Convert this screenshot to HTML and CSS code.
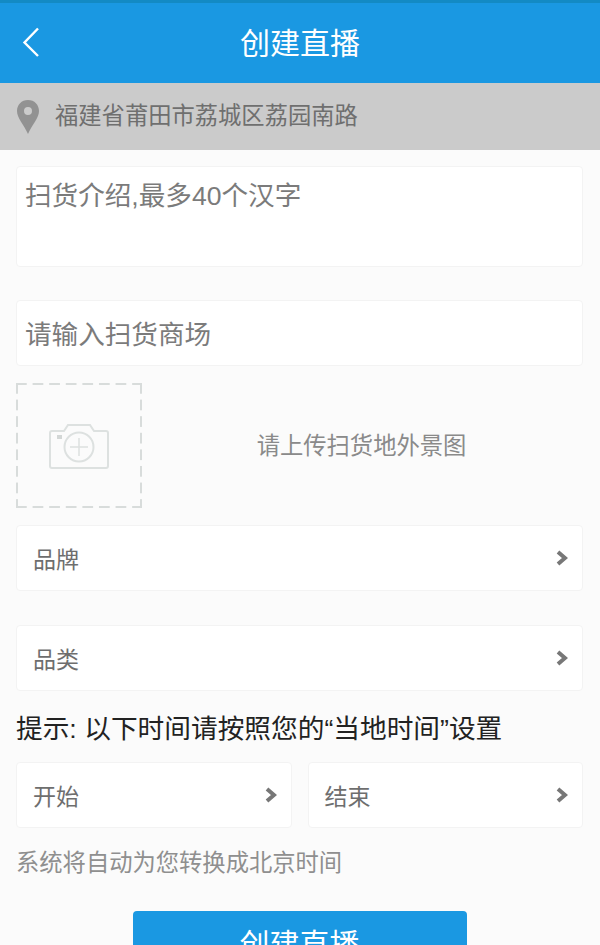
FILE: index.html
```html
<!DOCTYPE html>
<html lang="zh-CN">
  <head>
    <meta charset="UTF-8" />
    <meta name="viewport" content="width=device-width, initial-scale=1.0" />
    <title>创建直播</title>
    <link rel="stylesheet" href="styles.css">
  </head>

  <body>
    <header class="topbar">
      <svg class="back" width="20" height="32" viewBox="0 0 20 32">
        <path d="M17 2.5 L3.5 16.5 L17 30" fill="none" stroke="#fff" stroke-width="2.4" />
      </svg>
      <h1>创建直播</h1>
    </header>

    <div class="location">
      <svg class="pin" width="24" height="36" viewBox="0 0 24 36">
        <path fill-rule="evenodd" fill="#929292" d="M12 1 C5.5 1 1 5.8 1 12 C1 19 8 26 12 35 C16 26 23 19 23 12 C23 5.8 18.5 1 12 1 Z M12 8 A4 4 0 1 1 12 16 A4 4 0 1 1 12 8 Z" />
      </svg>
      <span>福建省莆田市荔城区荔园南路</span>
    </div>

    <main class="form">
      <div class="card intro">扫货介绍,最多40个汉字</div>
      <div class="card mall">请输入扫货商场</div>

      <div class="upload">
        <div class="upload-box">
          <svg width="60" height="46" viewBox="0 0 60 46">
            <g fill="none" stroke="#dde1e0" stroke-width="2">
              <path d="M3 8 H15 L19 2 H41 L45 8 H57 A2 2 0 0 1 59 10 V43 A2 2 0 0 1 57 45 H3 A2 2 0 0 1 1 43 V10 A2 2 0 0 1 3 8 Z" />
              <circle cx="30" cy="24" r="14.5" />
              <path d="M30 15 V33 M21 24 H39" stroke-width="1.5" />
            </g>
            <rect x="8" y="12" width="5" height="4" fill="#d3d7d6" />
          </svg>
        </div>
        <p>请上传扫货地外景图</p>
      </div>

      <div class="card row brand">
        <span>品牌</span>
        <svg class="chevron" width="12" height="16" viewBox="0 0 12 16"><path d="M2 2 L9 8 L2 14" /></svg>
      </div>
      <div class="card row category">
        <span>品类</span>
        <svg class="chevron" width="12" height="16" viewBox="0 0 12 16"><path d="M2 2 L9 8 L2 14" /></svg>
      </div>

      <p class="tip">提示: 以下时间请按照您的“当地时间”设置</p>

      <div class="times">
        <div class="card row">
          <span>开始</span>
          <svg class="chevron" width="12" height="16" viewBox="0 0 12 16"><path d="M2 2 L9 8 L2 14" /></svg>
        </div>
        <div class="card row">
          <span>结束</span>
          <svg class="chevron" width="12" height="16" viewBox="0 0 12 16"><path d="M2 2 L9 8 L2 14" /></svg>
        </div>
      </div>

      <p class="note">系统将自动为您转换成北京时间</p>

      <button class="submit">创建直播</button>
    </main>
  </body>
</html>
```

FILE: styles.css
```css
body {
  margin: 0;
  height: 945px;
  overflow: hidden;
  background-color: #fbfbfb;
  color: #333;
  font-family: "Liberation Sans", "Noto Sans CJK SC", sans-serif;
}

.topbar {
  display: flex;
  align-items: center;
  justify-content: center;
  position: relative;
  height: 83px;
  box-sizing: border-box;
  padding-top: 1px;
  background-color: #1a98e2;
  border-top: 3px solid #138ac4;
}

.topbar h1 {
  margin: 0;
  color: #fff;
  font-size: 30px;
  font-weight: 400;
  line-height: 1;
}

.back {
  position: absolute;
  left: 21px;
  top: 23px;
}

.location {
  display: flex;
  align-items: center;
  height: 67px;
  padding-left: 16px;
  gap: 15px;
  background-color: #cbcbcb;
  color: #6f6f6f;
  font-size: 23.3px;
  line-height: 67px;
}

.form {
  display: flex;
  flex-direction: column;
  padding: 16px 17px 0 16px;
}

.card {
  box-sizing: border-box;
  background-color: #fff;
  border: 1px solid #f3f3f3;
  border-radius: 4px;
}

.intro {
  height: 101px;
  padding: 11px 8px;
  color: #7b7b7b;
  font-size: 26.6px;
  line-height: 36px;
}

.mall {
  height: 66px;
  margin-top: 33px;
  padding-left: 8px;
  color: #7b7b7b;
  font-size: 26.6px;
  line-height: 68px;
}

.upload {
  display: flex;
  align-items: center;
  margin-top: 17px;
  height: 125px;
}

.upload-box {
  display: flex;
  align-items: center;
  justify-content: center;
  box-sizing: border-box;
  width: 126px;
  height: 125px;
  background-image:
    linear-gradient(90deg, #d8dcdb 11px, transparent 11px),
    linear-gradient(90deg, #d8dcdb 11px, transparent 11px),
    linear-gradient(#d8dcdb 11px, transparent 11px),
    linear-gradient(#d8dcdb 11px, transparent 11px);
  background-size: 16.6px 2px, 16.6px 2px, 2px 16.6px, 2px 16.6px;
  background-position: 0 0, 0 100%, 0 0, 100% 0;
  background-repeat: repeat-x, repeat-x, repeat-y, repeat-y;
}

.upload p {
  flex: 1;
  margin: 0 2px 4px 0;
  text-align: center;
  color: #8a8a8a;
  font-size: 23.3px;
}

.row {
  display: flex;
  align-items: center;
  justify-content: space-between;
  height: 66px;
  padding: 0 14px 0 16px;
  color: #6e6e6e;
  font-size: 23px;
}

.brand {
  margin-top: 17px;
}

.category {
  margin-top: 34px;
}

.chevron path {
  fill: none;
  stroke: #777;
  stroke-width: 4;
}

.tip {
  margin: 21px 0 0;
  color: #222;
  font-size: 26.7px;
  line-height: 34px;
}

.times {
  display: flex;
  gap: 16px;
  margin-top: 16px;
}

.times .row {
  flex: 1;
}

.note {
  margin: 20px 0 0;
  color: #8f8f8f;
  font-size: 23.3px;
  line-height: 30px;
}

.submit {
  align-self: center;
  flex: none;
  width: 334px;
  height: 66px;
  margin-top: 33px;
  border: 0;
  border-radius: 4px;
  background-color: #1a98e2;
  color: #fff;
  font-family: inherit;
  font-size: 30px;
  padding: 0 0 4px;
}
```
